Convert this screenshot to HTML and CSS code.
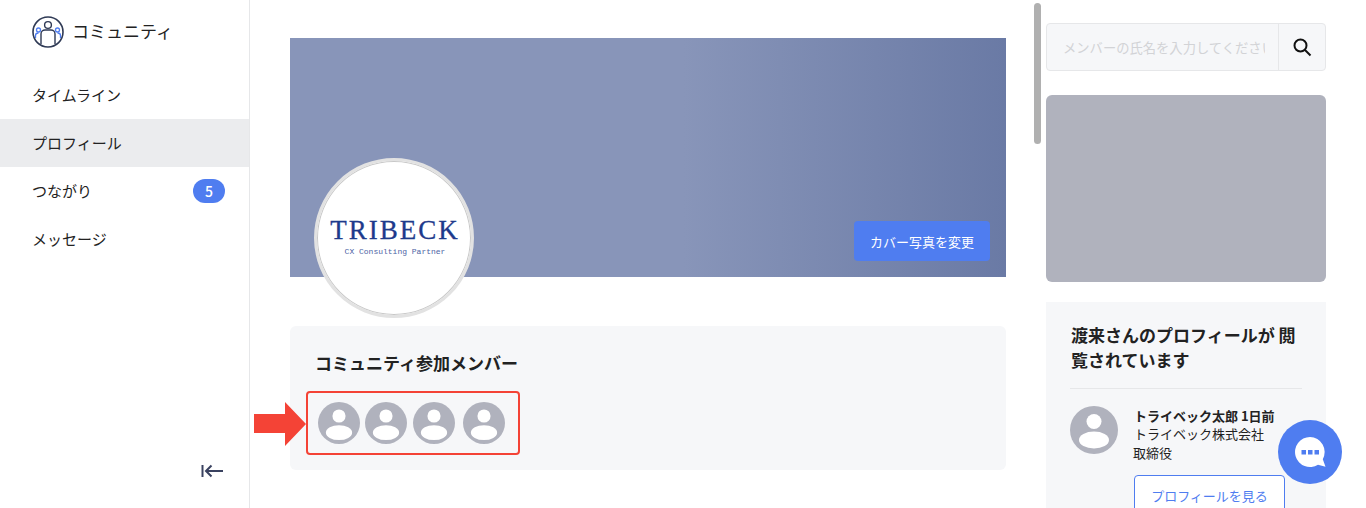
FILE: index.html
```html
<!DOCTYPE html>
<html lang="ja">
<head>
    <meta charset="UTF-8">
    <meta name="viewport" content="width=device-width, initial-scale=1.0">
    <title>コミュニティ</title>
    <link rel="stylesheet" href="styles.css">
</head>
<body>
    <div class="page">
        <aside class="sidebar">
            <div class="brand">
                <svg class="brand-icon" width="32" height="32" viewBox="0 0 32 32" fill="none">
                    <circle cx="16" cy="16" r="15" stroke="#2f3a55" stroke-width="1.6"/>
                    <circle cx="16" cy="9" r="3.4" stroke="#2f3a55" stroke-width="1.4"/>
                    <path d="M9 28v-10c0-2.500 2-4 4-4h6c2 0 4 1.500 4 4v10" stroke="#2f3a55" stroke-width="1.4"/>
                    <circle cx="6.500" cy="14" r="2" stroke="#4f7df0" stroke-width="1.300"/>
                    <circle cx="25.500" cy="14" r="2" stroke="#4f7df0" stroke-width="1.300"/>
                    <path d="M3.500 22v-2.500c0-1.500 1.200-2.500 3-2.500M28.500 22v-2.500c0-1.500-1.200-2.500-3-2.500" stroke="#4f7df0" stroke-width="1.300"/>
                </svg>
                <span>コミュニティ</span>
            </div>
            <nav class="nav">
                <a class="nav-item"><span class="nav-label">タイムライン</span></a>
                <a class="nav-item active"><span class="nav-label">プロフィール</span></a>
                <a class="nav-item"><span class="nav-label">つながり</span><span class="badge">5</span></a>
                <a class="nav-item"><span class="nav-label">メッセージ</span></a>
            </nav>
            <div class="collapse">
                <svg width="22" height="14" viewBox="0 0 22 14" fill="none" stroke="#3a4260" stroke-width="2">
                    <path d="M1.500 1v12"/>
                    <path d="M10.500 1.500L5 7l5.500 5.500M5 7h17"/>
                </svg>
            </div>
        </aside>

        <main class="main">
            <section class="cover">
                <div class="logo-circle">
                    <div class="logo-name">TRIBECK</div>
                    <div class="logo-sub">CX Consulting Partner</div>
                </div>
                <button class="cover-btn">カバー写真を変更</button>
            </section>

            <section class="members">
                <h3>コミュニティ参加メンバー</h3>
                <div class="member-list">
                    <svg class="avatar" viewBox="0 0 48 48"><circle cx="24" cy="24" r="24" fill="#b0b2bd"/><circle cx="24" cy="16" r="7.500" fill="#fff"/><ellipse cx="24" cy="35" rx="15" ry="8.500" fill="#fff"/></svg>
                    <svg class="avatar" viewBox="0 0 48 48"><circle cx="24" cy="24" r="24" fill="#b0b2bd"/><circle cx="24" cy="16" r="7.500" fill="#fff"/><ellipse cx="24" cy="35" rx="15" ry="8.500" fill="#fff"/></svg>
                    <svg class="avatar" viewBox="0 0 48 48"><circle cx="24" cy="24" r="24" fill="#b0b2bd"/><circle cx="24" cy="16" r="7.500" fill="#fff"/><ellipse cx="24" cy="35" rx="15" ry="8.500" fill="#fff"/></svg>
                    <svg class="avatar" viewBox="0 0 48 48"><circle cx="24" cy="24" r="24" fill="#b0b2bd"/><circle cx="24" cy="16" r="7.500" fill="#fff"/><ellipse cx="24" cy="35" rx="15" ry="8.500" fill="#fff"/></svg>
                    <svg class="red-arrow" width="52" height="44" viewBox="0 0 52 44"><path d="M0 12h31V0l21 22-21 22V31H0z" fill="#f44336"/></svg>
                </div>
            </section>
            <div class="scroll-thumb"></div>
        </main>

        <aside class="right">
            <div class="search">
                <input class="search-input" type="text" placeholder="メンバーの氏名を入力してください">
                <div class="search-btn">
                    <svg width="20" height="20" viewBox="0 0 20 20" fill="none" stroke="#111" stroke-width="2">
                        <circle cx="8.500" cy="8.500" r="6"/>
                        <path d="M13 13l5.500 5.500"/>
                    </svg>
                </div>
            </div>
            <div class="ad-block"></div>
            <section class="viewers">
                <h3>渡来さんのプロフィールが 閲覧されています</h3>
                <div class="viewer">
                    <svg class="viewer-avatar" viewBox="0 0 48 48"><circle cx="24" cy="24" r="24" fill="#b0b2bd"/><circle cx="24" cy="15.500" r="7.500" fill="#fff"/><ellipse cx="24" cy="34" rx="15" ry="8.500" fill="#fff"/></svg>
                    <div class="viewer-info">
                        <p class="viewer-name">トライベック太郎 1日前</p>
                        <p>トライベック株式会社</p>
                        <p class="viewer-role">取締役</p>
                        <button class="viewer-btn">プロフィールを見る</button>
                    </div>
                </div>
            </section>
        </aside>
    </div>

    <div class="chat">
        <svg width="34" height="34" viewBox="0 0 34 34">
            <path d="M17 2a15 15 0 1 0 8 27.700l7.500 2-2.700-7.500A15 15 0 0 0 17 2z" fill="#fff"/>
            <path d="M8.500 15h4.500v4.500H8.500zM15 15h4.500v4.500H15zM21.500 15H26v4.500h-4.500z" fill="#4f7df0"/>
        </svg>
    </div>
</body>
</html>
```

FILE: styles.css
```css
:root {
    --blue: #4f7df0;
    --panel: #f6f7f9;
    --line: #e6e7e9;
    --text: #222;
    --grey: #b0b2bd;
}

* {
    margin: 0;
    padding: 0;
    box-sizing: border-box;
}

html, body {
    height: 100%;
    overflow: hidden;
}

body {
    font-family: "Noto Sans CJK JP", "Noto Sans", sans-serif;
    color: var(--text);
    background: #fff;
}

.page {
    display: flex;
    height: 100vh;
    overflow: hidden;
}

/* Sidebar */
.sidebar {
    width: 250px;
    flex-shrink: 0;
    border-right: 1px solid var(--line);
    display: flex;
    flex-direction: column;
}

.brand {
    display: flex;
    align-items: center;
    gap: 8px;
    height: 71px;
    padding: 0 32px 7px;
    font-size: 17px;
}

.brand span {
    margin-bottom: 4px;
}

.nav-item {
    display: flex;
    align-items: center;
    justify-content: space-between;
    height: 48px;
    padding: 0 24px 0 32px;
    font-size: 15px;
}

.nav-item.active {
    background: #ebecee;
}

.nav-label {
    margin-bottom: 2px;
}

.badge {
    width: 32px;
    height: 24px;
    border-radius: 12px;
    background: var(--blue);
    color: #fff;
    font-size: 14px;
    font-weight: 500;
    text-align: center;
    line-height: 24px;
}

.collapse {
    margin-top: auto;
    padding: 0 26px 30px 0;
    display: flex;
    justify-content: flex-end;
}

/* Main column */
.main {
    flex: 1;
    position: relative;
    padding: 38px 40px 0;
}

.cover {
    position: relative;
    height: 239px;
    padding: 16px;
    display: flex;
    align-items: flex-end;
    justify-content: flex-end;
    background: linear-gradient(90deg, #8895b9 0%, #8895b9 55%, #6a7aa5 100%);
}

.cover-btn {
    width: 136px;
    height: 40px;
    border: 0;
    border-radius: 4px;
    background: var(--blue);
    color: #fff;
    font-family: inherit;
    font-size: 13px;
}

.logo-circle {
    position: absolute;
    left: 24px;
    top: 120px;
    width: 160px;
    height: 160px;
    border-radius: 50%;
    background: #fff;
    border: 3px solid #e2e2e2;
    box-shadow: inset 0 0 0 1px #c8c8c8;
    display: flex;
    flex-direction: column;
    align-items: center;
    padding: 56px 0 0 2px;
}

.logo-name {
    font-family: "Liberation Serif", serif;
    font-size: 27px;
    line-height: 27px;
    letter-spacing: 2px;
    color: #1d3a8c;
    -webkit-text-stroke: 0.3px #1d3a8c;
}

.logo-sub {
    font-family: "Liberation Mono", monospace;
    font-size: 8px;
    line-height: 10px;
    margin-top: 3px;
    color: #4d64a5;
}

.members {
    margin-top: 49px;
    height: 144px;
    padding: 24px 25px 0;
    border-radius: 6px;
    background: var(--panel);
}

.members h3 {
    font-size: 17px;
    font-weight: 700;
    line-height: 26px;
}

.member-list {
    position: relative;
    display: inline-flex;
    gap: 5px;
    align-items: center;
    margin: 15px 0 0 -9px;
    padding: 0 13px 0 10px;
    height: 64px;
    border: 2px solid #f44336;
    border-radius: 4px;
}

.avatar {
    width: 42px;
    height: 42px;
}

.avatar:nth-child(3) {
    margin-left: 1px;
}

.avatar:nth-child(4) {
    margin-left: 3px;
}

.red-arrow {
    position: absolute;
    left: -54px;
    top: 9px;
}

.scroll-thumb {
    position: absolute;
    top: 3px;
    right: 5px;
    width: 7px;
    height: 141px;
    border-radius: 4px;
    background: #b0b0b0;
}

/* Right column */
.right {
    width: 320px;
    flex-shrink: 0;
    padding: 23px 40px 0 0;
}

.search {
    display: flex;
    height: 48px;
    border: 1px solid var(--line);
    border-radius: 4px;
    background: var(--panel);
    overflow: hidden;
}

.search-input {
    flex: 1;
    min-width: 0;
    border: 0;
    outline: 0;
    background: transparent;
    padding: 0 13px 0 16px;
    font-family: inherit;
    font-size: 13.300px;
}

.search-input::placeholder {
    color: #d2d3d6;
}

.search-btn {
    width: 47px;
    flex-shrink: 0;
    border-left: 1px solid var(--line);
    display: flex;
    align-items: center;
    justify-content: center;
}

.ad-block {
    height: 187px;
    margin-top: 24px;
    border-radius: 6px;
    background: var(--grey);
}

.viewers {
    margin-top: 20px;
    padding: 20px 24px 0;
    height: 206px;
    background: var(--panel);
}

.viewers h3 {
    font-size: 17px;
    line-height: 25px;
    padding: 0 0 16px 1px;
    border-bottom: 1px solid var(--line);
}

.viewer {
    display: flex;
    gap: 16px;
    margin-top: 17px;
}

.viewer-avatar {
    width: 48px;
    height: 48px;
    flex-shrink: 0;
}

.viewer-info {
    font-size: 13px;
    line-height: 19px;
}

.viewer-name {
    font-weight: 700;
    margin-bottom: -1px;
}

.viewer-role {
    margin-left: -1px;
}

.viewer-btn {
    display: block;
    width: 151px;
    height: 40px;
    margin-top: 13px;
    border: 1px solid var(--blue);
    border-radius: 4px;
    background: #fff;
    color: var(--blue);
    font-family: inherit;
    font-size: 13px;
}

/* Chat button */
.chat {
    position: fixed;
    right: 24px;
    bottom: 24px;
    width: 64px;
    height: 64px;
    border-radius: 50%;
    background: var(--blue);
    display: flex;
    align-items: center;
    justify-content: center;
}
```
